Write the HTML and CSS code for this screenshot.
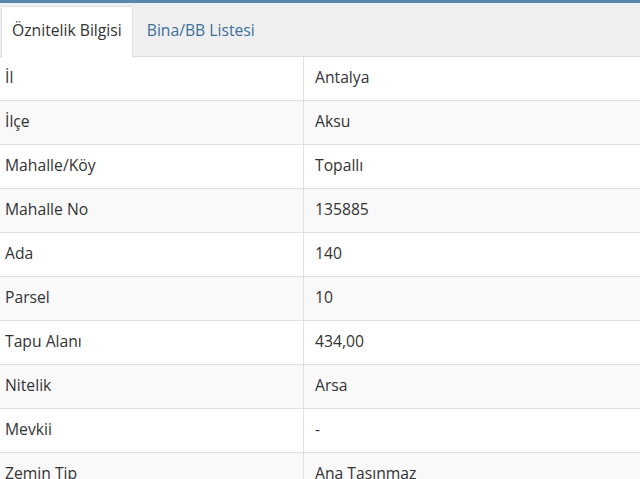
FILE: index.html
```html
<!DOCTYPE html>
<html lang="tr">
<head>
<meta charset="utf-8">
<link rel="stylesheet" href="styles.css">
</head>
<body>
<div class="panel">
  <div class="tabs">
    <div class="tab active">Öznitelik Bilgisi</div>
    <div class="tab">Bina/BB Listesi</div>
  </div>
  <table class="attrs">
    <tr><td>İl</td><td>Antalya</td></tr>
    <tr><td>İlçe</td><td>Aksu</td></tr>
    <tr><td>Mahalle/Köy</td><td>Topallı</td></tr>
    <tr><td>Mahalle No</td><td>135885</td></tr>
    <tr><td>Ada</td><td>140</td></tr>
    <tr><td>Parsel</td><td>10</td></tr>
    <tr><td>Tapu Alanı</td><td>434,00</td></tr>
    <tr><td>Nitelik</td><td>Arsa</td></tr>
    <tr><td>Mevkii</td><td>-</td></tr>
    <tr><td>Zemin Tip</td><td>Ana Taşınmaz</td></tr>
  </table>
</div>
</body>
</html>
```
FILE: styles.css
```css
html, body {
  margin: 0;
  padding: 0;
  background: #fff;
}
body {
  font-family: "Open Sans", "Noto Sans", sans-serif;
  font-size: 15.7px;
  color: #333;
}
.panel {
  border-top: 3px solid #5a86ad;
  width: 640px;
}
.tabs {
  display: flex;
  background: #efefef;
  padding: 3px 0 0 1px;
  border-bottom: 1px solid #dcdcdc;
  height: 50px;
}
.tab {
  padding: 0 12px 0 14px;
  line-height: 48px;
  height: 50px;
  color: #3c6f9c;
}
.tab.active {
  background: #fff;
  color: #333;
  border: 1px solid #e2e2e2;
  border-bottom: none;
  padding: 0 10px 0 10px;
  height: 51px;
  line-height: 46px;
}
.attrs {
  width: 100%;
  border-collapse: collapse;
}
.attrs td {
  height: 40px;
  padding: 0 0 3px 5px;
  border-bottom: 1px solid #e0e0e0;
  vertical-align: middle;
}
.attrs td:first-child {
  width: 298px;
  border-right: 1px solid #e0e0e0;
}
.attrs td:last-child {
  padding-left: 11px;
}
.attrs tr:nth-child(even) td {
  background: #f9f9f9;
}
```
